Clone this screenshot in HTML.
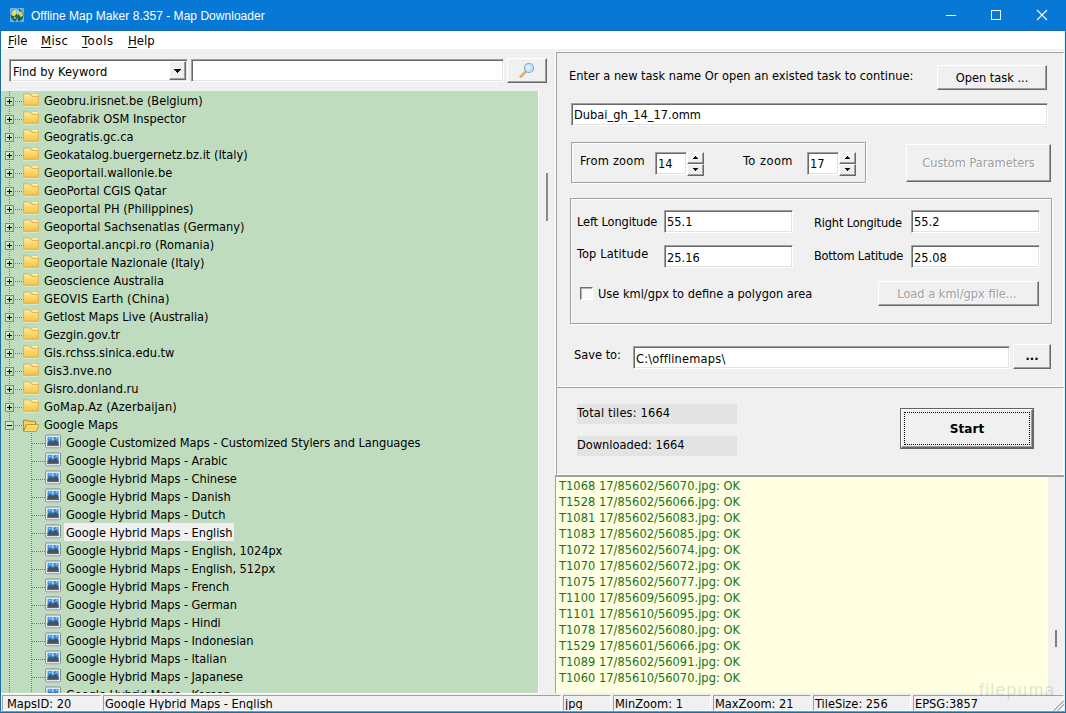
<!DOCTYPE html><html><head><meta charset="utf-8"><title>Offline Map Maker</title><style>html,body{margin:0;padding:0;background:#f0f0f0;overflow:hidden}
#win{position:relative;width:1066px;height:713px;overflow:hidden;background:#f0f0f0;font-family:"DejaVu Sans Condensed","Liberation Sans",sans-serif;font-size:12.7px;color:#000;line-height:16px}
#win *{box-sizing:border-box}
.a{position:absolute;white-space:nowrap}
#title{left:0;top:0;width:1066px;height:31px;background:#0878d6;border-bottom:1px solid #1769ad}
#ttext{left:31px;top:8px;color:#fff;font-family:"Liberation Sans",sans-serif;font-size:12px;letter-spacing:0.03px;line-height:16px}
#menubar{left:1px;top:31px;width:1064px;height:18px;background:#fff}
.mi{top:33px;font-size:13px;line-height:16px}
.mi u{text-decoration:underline;text-underline-offset:2px}
.bl{left:0;top:31px;width:1px;height:682px;background:#1c6ca0}
.br{left:1064px;top:31px;width:2px;height:682px;background:linear-gradient(90deg,#e2f2fa 0,#e2f2fa 50%,#1c6ca0 50%)}
.bb{left:0;top:711px;width:1066px;height:2px;background:linear-gradient(180deg,#5da0d4 0,#5da0d4 50%,#1c6ca0 50%)}
.sunken{background:#fff;border:1px solid;border-color:#a0a0a0 #fff #fff #a0a0a0;box-shadow:inset 1px 1px 0 #696969,inset -1px -1px 0 #e3e3e3}
.raised{background:#f0f0f0;border:1px solid;border-color:#fff #696969 #696969 #fff;box-shadow:inset -1px -1px 0 #a0a0a0,inset 1px 1px 0 #f0f0f0;text-align:center}
.dis{color:#a0a0a0;text-shadow:1px 1px 0 #fff}
.grp{border:1px solid #a0a0a0;box-shadow:inset 1px 1px 0 #fff,1px 1px 0 #fff}
.panel{border:1px solid;border-color:#a0a0a0 #fff #fff #a0a0a0;box-shadow:-1px -1px 0 #fff}
#tree{position:absolute;left:1px;top:91px;width:537px;height:602px;background:#bfdcbf;overflow:hidden}
.row{position:absolute;left:0;height:18px;width:537px;white-space:nowrap}
.pm{position:absolute;left:4px;top:6px;width:9px;height:9px;border:1px solid #7c8c7c;background:linear-gradient(135deg,#dcebdc,#bdd6bd);z-index:2}
.pm i{position:absolute;background:#000}
.pm .h{left:1px;top:3px;width:5px;height:1px}
.pm .v{left:3px;top:1px;width:1px;height:5px}
.dots{position:absolute;height:1px;top:10px;background-image:linear-gradient(90deg,#6f806f 50%,transparent 50%);background-size:2px 1px}
.d0{left:14px;width:9px}
.d1{left:31px;width:14px}
.vline{position:absolute;width:1px;background-image:linear-gradient(180deg,#6f806f 50%,transparent 50%);background-size:1px 2px}
.v0{left:8px;top:0;height:602px}
.v1{left:30px;top:342px;height:260px}
.fold{position:absolute;left:21px;top:1px}
.mapi{position:absolute;left:43px;top:0px}
.lbl{position:absolute;top:0;height:18px;line-height:16px;padding:2px 2px 0}
.l0{left:41px}
.l1{left:63px;letter-spacing:-0.05px}
.sel{background:#f0f0f0}
#log{position:absolute;left:556px;top:477px;width:492px;height:216px;background:#ffffe1;overflow:hidden;color:#187218}
.ll{position:absolute;left:3px;letter-spacing:0.05px;white-space:nowrap;line-height:16px}
.sp{top:695px;height:16px;border:1px solid;border-color:#a0a0a0 #fff #fff #a0a0a0;line-height:15px;padding-left:1px;overflow:hidden}
</style></head><body><div id="win">
<svg width="0" height="0" style="position:absolute"><defs><linearGradient id="fg" x1="0" y1="0" x2="0" y2="1"><stop offset="0" stop-color="#fdeeb0"/><stop offset="0.45" stop-color="#fbd970"/><stop offset="1" stop-color="#f6c346"/></linearGradient></defs></svg>
<div id="title" class="a"></div>
<svg class="a" style="left:10px;top:8px" width="14" height="14" viewBox="0 0 14 14"><rect width="14" height="14" fill="#64b4ef"/><circle cx="7" cy="7.2" r="6.4" fill="#23604e"/><path d="M1.2 5.6Q2.6 1.4 6 1.2L6.4 5.4L4.6 8.2L1.6 7.6Z" fill="#e3d96e"/><path d="M8.8 3.2L12 3.8L13 7.4L10.6 9.2L9 6.6Z" fill="#e8cf48"/><path d="M6 1.2L8.8 1.6L9 5.6L7.6 7.6L6.4 5.4Z" fill="#a8d2e4"/><path d="M4 8.4L6.4 9.2L5.6 11L3.6 10.4Z" fill="#9bb85c"/><path d="M7.1 9.8L8.4 13.8H6Z" fill="#86c2ee"/></svg>
<div id="ttext" class="a">Offline Map Maker 8.357 - Map Downloader</div>
<svg class="a" style="left:940px;top:5px" width="112" height="20" viewBox="0 0 112 20"><path d="M6 10.5H16" stroke="#fff" stroke-width="1"/><rect x="51.5" y="5.5" width="9" height="9" fill="none" stroke="#fff" stroke-width="1"/><path d="M97 5L107 15M107 5L97 15" stroke="#fff" stroke-width="1.1"/></svg>
<div id="menubar" class="a"></div>
<div class="a mi" style="left:8px"><u>F</u>ile</div>
<div class="a mi" style="left:41px;letter-spacing:0.35px"><u>M</u>isc</div>
<div class="a mi" style="left:82px;letter-spacing:0.65px"><u>T</u>ools</div>
<div class="a mi" style="left:128px"><u>H</u>elp</div>
<div class="a sunken" style="left:9px;top:59px;width:179px;height:23px"><div class="a" style="left:3px;top:4px;letter-spacing:0.07px">Find by Keyword</div><div class="a raised" style="left:159px;top:1px;width:17px;height:19px"><svg class="a" style="left:4px;top:7px" width="7" height="4" viewBox="0 0 7 4" shape-rendering="crispEdges"><path d="M0 0H7V1H6V2H5V3H4V4H3V3H2V2H1V1H0Z" fill="#000"/></svg></div></div>
<div class="a sunken" style="left:191px;top:59px;width:313px;height:23px"></div>
<div class="a raised" style="left:507px;top:58px;width:40px;height:25px"><svg class="a" style="left:9px;top:2px" width="20" height="20" viewBox="0 0 20 20"><path d="M9.2 10L3.6 15.6" stroke="#d9a066" stroke-width="2.6" stroke-linecap="round"/><path d="M8.8 9.8L3.4 15.2" stroke="#f0cfa0" stroke-width=".9" stroke-linecap="round"/><circle cx="12" cy="7" r="4.5" fill="#c6e8f9" stroke="#7fa9d2" stroke-width="1.2"/><circle cx="11.2" cy="6.2" r="1.8" fill="#e4f5fd"/></svg></div>
<div class="a" style="left:538px;top:91px;width:1px;height:602px;background:#fff"></div>
<div class="a" style="left:546px;top:173px;width:2px;height:48px;background:#8b8b8b"></div>

<div id="tree">
<div class="row" style="top:0px"><span class="pm"><i class="h"></i><i class="v"></i></span><span class="dots d0"></span><svg class="fold" width="18" height="16" viewBox="0 0 18 16"><rect x="1.2" y="13.7" width="15.6" height=".9" fill="#e9f2df" opacity=".85"/><path d="M9.4 1.6H16.1V5H10.5Z" fill="#fff3ae" stroke="#e6c160" stroke-width=".8"/><path d="M1.6 1.9H7.6L9.8 4.4H16.2V13.2H1.6Z" fill="url(#fg)" stroke="#dfae45" stroke-width=".9" stroke-linejoin="round"/>
</svg><span class="lbl l0">Geobru.irisnet.be (Belgium)</span></div>
<div class="row" style="top:18px"><span class="pm"><i class="h"></i><i class="v"></i></span><span class="dots d0"></span><svg class="fold" width="18" height="16" viewBox="0 0 18 16"><rect x="1.2" y="13.7" width="15.6" height=".9" fill="#e9f2df" opacity=".85"/><path d="M9.4 1.6H16.1V5H10.5Z" fill="#fff3ae" stroke="#e6c160" stroke-width=".8"/><path d="M1.6 1.9H7.6L9.8 4.4H16.2V13.2H1.6Z" fill="url(#fg)" stroke="#dfae45" stroke-width=".9" stroke-linejoin="round"/>
</svg><span class="lbl l0">Geofabrik OSM Inspector</span></div>
<div class="row" style="top:36px"><span class="pm"><i class="h"></i><i class="v"></i></span><span class="dots d0"></span><svg class="fold" width="18" height="16" viewBox="0 0 18 16"><rect x="1.2" y="13.7" width="15.6" height=".9" fill="#e9f2df" opacity=".85"/><path d="M9.4 1.6H16.1V5H10.5Z" fill="#fff3ae" stroke="#e6c160" stroke-width=".8"/><path d="M1.6 1.9H7.6L9.8 4.4H16.2V13.2H1.6Z" fill="url(#fg)" stroke="#dfae45" stroke-width=".9" stroke-linejoin="round"/>
</svg><span class="lbl l0">Geogratis.gc.ca</span></div>
<div class="row" style="top:54px"><span class="pm"><i class="h"></i><i class="v"></i></span><span class="dots d0"></span><svg class="fold" width="18" height="16" viewBox="0 0 18 16"><rect x="1.2" y="13.7" width="15.6" height=".9" fill="#e9f2df" opacity=".85"/><path d="M9.4 1.6H16.1V5H10.5Z" fill="#fff3ae" stroke="#e6c160" stroke-width=".8"/><path d="M1.6 1.9H7.6L9.8 4.4H16.2V13.2H1.6Z" fill="url(#fg)" stroke="#dfae45" stroke-width=".9" stroke-linejoin="round"/>
</svg><span class="lbl l0">Geokatalog.buergernetz.bz.it (Italy)</span></div>
<div class="row" style="top:72px"><span class="pm"><i class="h"></i><i class="v"></i></span><span class="dots d0"></span><svg class="fold" width="18" height="16" viewBox="0 0 18 16"><rect x="1.2" y="13.7" width="15.6" height=".9" fill="#e9f2df" opacity=".85"/><path d="M9.4 1.6H16.1V5H10.5Z" fill="#fff3ae" stroke="#e6c160" stroke-width=".8"/><path d="M1.6 1.9H7.6L9.8 4.4H16.2V13.2H1.6Z" fill="url(#fg)" stroke="#dfae45" stroke-width=".9" stroke-linejoin="round"/>
</svg><span class="lbl l0">Geoportail.wallonie.be</span></div>
<div class="row" style="top:90px"><span class="pm"><i class="h"></i><i class="v"></i></span><span class="dots d0"></span><svg class="fold" width="18" height="16" viewBox="0 0 18 16"><rect x="1.2" y="13.7" width="15.6" height=".9" fill="#e9f2df" opacity=".85"/><path d="M9.4 1.6H16.1V5H10.5Z" fill="#fff3ae" stroke="#e6c160" stroke-width=".8"/><path d="M1.6 1.9H7.6L9.8 4.4H16.2V13.2H1.6Z" fill="url(#fg)" stroke="#dfae45" stroke-width=".9" stroke-linejoin="round"/>
</svg><span class="lbl l0">GeoPortal CGIS Qatar</span></div>
<div class="row" style="top:108px"><span class="pm"><i class="h"></i><i class="v"></i></span><span class="dots d0"></span><svg class="fold" width="18" height="16" viewBox="0 0 18 16"><rect x="1.2" y="13.7" width="15.6" height=".9" fill="#e9f2df" opacity=".85"/><path d="M9.4 1.6H16.1V5H10.5Z" fill="#fff3ae" stroke="#e6c160" stroke-width=".8"/><path d="M1.6 1.9H7.6L9.8 4.4H16.2V13.2H1.6Z" fill="url(#fg)" stroke="#dfae45" stroke-width=".9" stroke-linejoin="round"/>
</svg><span class="lbl l0">Geoportal PH (Philippines)</span></div>
<div class="row" style="top:126px"><span class="pm"><i class="h"></i><i class="v"></i></span><span class="dots d0"></span><svg class="fold" width="18" height="16" viewBox="0 0 18 16"><rect x="1.2" y="13.7" width="15.6" height=".9" fill="#e9f2df" opacity=".85"/><path d="M9.4 1.6H16.1V5H10.5Z" fill="#fff3ae" stroke="#e6c160" stroke-width=".8"/><path d="M1.6 1.9H7.6L9.8 4.4H16.2V13.2H1.6Z" fill="url(#fg)" stroke="#dfae45" stroke-width=".9" stroke-linejoin="round"/>
</svg><span class="lbl l0">Geoportal Sachsenatlas (Germany)</span></div>
<div class="row" style="top:144px"><span class="pm"><i class="h"></i><i class="v"></i></span><span class="dots d0"></span><svg class="fold" width="18" height="16" viewBox="0 0 18 16"><rect x="1.2" y="13.7" width="15.6" height=".9" fill="#e9f2df" opacity=".85"/><path d="M9.4 1.6H16.1V5H10.5Z" fill="#fff3ae" stroke="#e6c160" stroke-width=".8"/><path d="M1.6 1.9H7.6L9.8 4.4H16.2V13.2H1.6Z" fill="url(#fg)" stroke="#dfae45" stroke-width=".9" stroke-linejoin="round"/>
</svg><span class="lbl l0" style="letter-spacing:0.07px">Geoportal.ancpi.ro (Romania)</span></div>
<div class="row" style="top:162px"><span class="pm"><i class="h"></i><i class="v"></i></span><span class="dots d0"></span><svg class="fold" width="18" height="16" viewBox="0 0 18 16"><rect x="1.2" y="13.7" width="15.6" height=".9" fill="#e9f2df" opacity=".85"/><path d="M9.4 1.6H16.1V5H10.5Z" fill="#fff3ae" stroke="#e6c160" stroke-width=".8"/><path d="M1.6 1.9H7.6L9.8 4.4H16.2V13.2H1.6Z" fill="url(#fg)" stroke="#dfae45" stroke-width=".9" stroke-linejoin="round"/>
</svg><span class="lbl l0">Geoportale Nazionale (Italy)</span></div>
<div class="row" style="top:180px"><span class="pm"><i class="h"></i><i class="v"></i></span><span class="dots d0"></span><svg class="fold" width="18" height="16" viewBox="0 0 18 16"><rect x="1.2" y="13.7" width="15.6" height=".9" fill="#e9f2df" opacity=".85"/><path d="M9.4 1.6H16.1V5H10.5Z" fill="#fff3ae" stroke="#e6c160" stroke-width=".8"/><path d="M1.6 1.9H7.6L9.8 4.4H16.2V13.2H1.6Z" fill="url(#fg)" stroke="#dfae45" stroke-width=".9" stroke-linejoin="round"/>
</svg><span class="lbl l0">Geoscience Australia</span></div>
<div class="row" style="top:198px"><span class="pm"><i class="h"></i><i class="v"></i></span><span class="dots d0"></span><svg class="fold" width="18" height="16" viewBox="0 0 18 16"><rect x="1.2" y="13.7" width="15.6" height=".9" fill="#e9f2df" opacity=".85"/><path d="M9.4 1.6H16.1V5H10.5Z" fill="#fff3ae" stroke="#e6c160" stroke-width=".8"/><path d="M1.6 1.9H7.6L9.8 4.4H16.2V13.2H1.6Z" fill="url(#fg)" stroke="#dfae45" stroke-width=".9" stroke-linejoin="round"/>
</svg><span class="lbl l0" style="letter-spacing:0.15px">GEOVIS Earth (China)</span></div>
<div class="row" style="top:216px"><span class="pm"><i class="h"></i><i class="v"></i></span><span class="dots d0"></span><svg class="fold" width="18" height="16" viewBox="0 0 18 16"><rect x="1.2" y="13.7" width="15.6" height=".9" fill="#e9f2df" opacity=".85"/><path d="M9.4 1.6H16.1V5H10.5Z" fill="#fff3ae" stroke="#e6c160" stroke-width=".8"/><path d="M1.6 1.9H7.6L9.8 4.4H16.2V13.2H1.6Z" fill="url(#fg)" stroke="#dfae45" stroke-width=".9" stroke-linejoin="round"/>
</svg><span class="lbl l0">Getlost Maps Live (Australia)</span></div>
<div class="row" style="top:234px"><span class="pm"><i class="h"></i><i class="v"></i></span><span class="dots d0"></span><svg class="fold" width="18" height="16" viewBox="0 0 18 16"><rect x="1.2" y="13.7" width="15.6" height=".9" fill="#e9f2df" opacity=".85"/><path d="M9.4 1.6H16.1V5H10.5Z" fill="#fff3ae" stroke="#e6c160" stroke-width=".8"/><path d="M1.6 1.9H7.6L9.8 4.4H16.2V13.2H1.6Z" fill="url(#fg)" stroke="#dfae45" stroke-width=".9" stroke-linejoin="round"/>
</svg><span class="lbl l0">Gezgin.gov.tr</span></div>
<div class="row" style="top:252px"><span class="pm"><i class="h"></i><i class="v"></i></span><span class="dots d0"></span><svg class="fold" width="18" height="16" viewBox="0 0 18 16"><rect x="1.2" y="13.7" width="15.6" height=".9" fill="#e9f2df" opacity=".85"/><path d="M9.4 1.6H16.1V5H10.5Z" fill="#fff3ae" stroke="#e6c160" stroke-width=".8"/><path d="M1.6 1.9H7.6L9.8 4.4H16.2V13.2H1.6Z" fill="url(#fg)" stroke="#dfae45" stroke-width=".9" stroke-linejoin="round"/>
</svg><span class="lbl l0">Gis.rchss.sinica.edu.tw</span></div>
<div class="row" style="top:270px"><span class="pm"><i class="h"></i><i class="v"></i></span><span class="dots d0"></span><svg class="fold" width="18" height="16" viewBox="0 0 18 16"><rect x="1.2" y="13.7" width="15.6" height=".9" fill="#e9f2df" opacity=".85"/><path d="M9.4 1.6H16.1V5H10.5Z" fill="#fff3ae" stroke="#e6c160" stroke-width=".8"/><path d="M1.6 1.9H7.6L9.8 4.4H16.2V13.2H1.6Z" fill="url(#fg)" stroke="#dfae45" stroke-width=".9" stroke-linejoin="round"/>
</svg><span class="lbl l0">Gis3.nve.no</span></div>
<div class="row" style="top:288px"><span class="pm"><i class="h"></i><i class="v"></i></span><span class="dots d0"></span><svg class="fold" width="18" height="16" viewBox="0 0 18 16"><rect x="1.2" y="13.7" width="15.6" height=".9" fill="#e9f2df" opacity=".85"/><path d="M9.4 1.6H16.1V5H10.5Z" fill="#fff3ae" stroke="#e6c160" stroke-width=".8"/><path d="M1.6 1.9H7.6L9.8 4.4H16.2V13.2H1.6Z" fill="url(#fg)" stroke="#dfae45" stroke-width=".9" stroke-linejoin="round"/>
</svg><span class="lbl l0">Gisro.donland.ru</span></div>
<div class="row" style="top:306px"><span class="pm"><i class="h"></i><i class="v"></i></span><span class="dots d0"></span><svg class="fold" width="18" height="16" viewBox="0 0 18 16"><rect x="1.2" y="13.7" width="15.6" height=".9" fill="#e9f2df" opacity=".85"/><path d="M9.4 1.6H16.1V5H10.5Z" fill="#fff3ae" stroke="#e6c160" stroke-width=".8"/><path d="M1.6 1.9H7.6L9.8 4.4H16.2V13.2H1.6Z" fill="url(#fg)" stroke="#dfae45" stroke-width=".9" stroke-linejoin="round"/>
</svg><span class="lbl l0" style="letter-spacing:0.13px">GoMap.Az (Azerbaijan)</span></div>
<div class="row" style="top:324px"><span class="pm"><i class="h"></i></span><span class="dots d0"></span><svg class="fold" width="18" height="16" viewBox="0 0 18 16"><path d="M1.5 5.2Q1.5 4.3 2.4 4.3H5.6L6.8 5.3H12.6Q13.6 5.3 13.6 6.3V8.8H4.2L1.8 15Q1.5 14.5 1.5 13.8Z" fill="#f3d468" stroke="#b98a14" stroke-width="1.1" stroke-linejoin="round"/><path d="M4.4 8.6H16.2Q16.9 8.6 16.6 9.4L14.6 15Q14.4 15.6 13.7 15.6H2.4Q1.7 15.6 2 14.9Z" fill="#ffe98e" stroke="#c4961e" stroke-width="1" stroke-linejoin="round"/><path d="M4.9 9.9H15.3L13.9 14.4H3.3Z" fill="#fad561"/>
</svg><span class="lbl l0">Google Maps</span></div>
<div class="row" style="top:342px"><span class="dots d1"></span><svg class="mapi" width="18" height="16" viewBox="0 0 18 16"><rect x="1.6" y="15.4" width="15" height=".9" fill="#eef4ea" opacity=".9"/><rect x="1.7" y="2" width="14.7" height="12.9" rx=".9" fill="#fdfefe" stroke="#7b868c" stroke-width="1"/><rect x="3.5" y="3.8" width="11.1" height="9.3" fill="#3690e6"/><path d="M3.5 9.6L5 8.2Q6.3 6.9 7.4 8L9 9.2L10.6 7.6Q11.8 6.6 12.8 7.8L14.6 9.6V13.1H3.5Z" fill="#48525a"/><path d="M3.5 11.8H14.6V13.1H3.5Z" fill="#63676a"/><circle cx="9.2" cy="5.6" r="1.5" fill="#d8eefc"/><circle cx="9.9" cy="5.6" r="1.15" fill="#3690e6"/><path d="M5.6 4.5V6.1M4.8 5.3H6.4M12.6 4.3V5.9M11.8 5.1H13.4" stroke="#bfe0fa" stroke-width=".7"/>
</svg><span class="lbl l1">Google Customized Maps - Customized Stylers and Languages</span></div>
<div class="row" style="top:360px"><span class="dots d1"></span><svg class="mapi" width="18" height="16" viewBox="0 0 18 16"><rect x="1.6" y="15.4" width="15" height=".9" fill="#eef4ea" opacity=".9"/><rect x="1.7" y="2" width="14.7" height="12.9" rx=".9" fill="#fdfefe" stroke="#7b868c" stroke-width="1"/><rect x="3.5" y="3.8" width="11.1" height="9.3" fill="#3690e6"/><path d="M3.5 9.6L5 8.2Q6.3 6.9 7.4 8L9 9.2L10.6 7.6Q11.8 6.6 12.8 7.8L14.6 9.6V13.1H3.5Z" fill="#48525a"/><path d="M3.5 11.8H14.6V13.1H3.5Z" fill="#63676a"/><circle cx="9.2" cy="5.6" r="1.5" fill="#d8eefc"/><circle cx="9.9" cy="5.6" r="1.15" fill="#3690e6"/><path d="M5.6 4.5V6.1M4.8 5.3H6.4M12.6 4.3V5.9M11.8 5.1H13.4" stroke="#bfe0fa" stroke-width=".7"/>
</svg><span class="lbl l1">Google Hybrid Maps - Arabic</span></div>
<div class="row" style="top:378px"><span class="dots d1"></span><svg class="mapi" width="18" height="16" viewBox="0 0 18 16"><rect x="1.6" y="15.4" width="15" height=".9" fill="#eef4ea" opacity=".9"/><rect x="1.7" y="2" width="14.7" height="12.9" rx=".9" fill="#fdfefe" stroke="#7b868c" stroke-width="1"/><rect x="3.5" y="3.8" width="11.1" height="9.3" fill="#3690e6"/><path d="M3.5 9.6L5 8.2Q6.3 6.9 7.4 8L9 9.2L10.6 7.6Q11.8 6.6 12.8 7.8L14.6 9.6V13.1H3.5Z" fill="#48525a"/><path d="M3.5 11.8H14.6V13.1H3.5Z" fill="#63676a"/><circle cx="9.2" cy="5.6" r="1.5" fill="#d8eefc"/><circle cx="9.9" cy="5.6" r="1.15" fill="#3690e6"/><path d="M5.6 4.5V6.1M4.8 5.3H6.4M12.6 4.3V5.9M11.8 5.1H13.4" stroke="#bfe0fa" stroke-width=".7"/>
</svg><span class="lbl l1">Google Hybrid Maps - Chinese</span></div>
<div class="row" style="top:396px"><span class="dots d1"></span><svg class="mapi" width="18" height="16" viewBox="0 0 18 16"><rect x="1.6" y="15.4" width="15" height=".9" fill="#eef4ea" opacity=".9"/><rect x="1.7" y="2" width="14.7" height="12.9" rx=".9" fill="#fdfefe" stroke="#7b868c" stroke-width="1"/><rect x="3.5" y="3.8" width="11.1" height="9.3" fill="#3690e6"/><path d="M3.5 9.6L5 8.2Q6.3 6.9 7.4 8L9 9.2L10.6 7.6Q11.8 6.6 12.8 7.8L14.6 9.6V13.1H3.5Z" fill="#48525a"/><path d="M3.5 11.8H14.6V13.1H3.5Z" fill="#63676a"/><circle cx="9.2" cy="5.6" r="1.5" fill="#d8eefc"/><circle cx="9.9" cy="5.6" r="1.15" fill="#3690e6"/><path d="M5.6 4.5V6.1M4.8 5.3H6.4M12.6 4.3V5.9M11.8 5.1H13.4" stroke="#bfe0fa" stroke-width=".7"/>
</svg><span class="lbl l1">Google Hybrid Maps - Danish</span></div>
<div class="row" style="top:414px"><span class="dots d1"></span><svg class="mapi" width="18" height="16" viewBox="0 0 18 16"><rect x="1.6" y="15.4" width="15" height=".9" fill="#eef4ea" opacity=".9"/><rect x="1.7" y="2" width="14.7" height="12.9" rx=".9" fill="#fdfefe" stroke="#7b868c" stroke-width="1"/><rect x="3.5" y="3.8" width="11.1" height="9.3" fill="#3690e6"/><path d="M3.5 9.6L5 8.2Q6.3 6.9 7.4 8L9 9.2L10.6 7.6Q11.8 6.6 12.8 7.8L14.6 9.6V13.1H3.5Z" fill="#48525a"/><path d="M3.5 11.8H14.6V13.1H3.5Z" fill="#63676a"/><circle cx="9.2" cy="5.6" r="1.5" fill="#d8eefc"/><circle cx="9.9" cy="5.6" r="1.15" fill="#3690e6"/><path d="M5.6 4.5V6.1M4.8 5.3H6.4M12.6 4.3V5.9M11.8 5.1H13.4" stroke="#bfe0fa" stroke-width=".7"/>
</svg><span class="lbl l1">Google Hybrid Maps - Dutch</span></div>
<div class="row" style="top:432px"><span class="dots d1"></span><svg class="mapi" width="18" height="16" viewBox="0 0 18 16"><rect x="1.6" y="15.4" width="15" height=".9" fill="#eef4ea" opacity=".9"/><rect x="1.7" y="2" width="14.7" height="12.9" rx=".9" fill="#fdfefe" stroke="#7b868c" stroke-width="1"/><rect x="3.5" y="3.8" width="11.1" height="9.3" fill="#3690e6"/><path d="M3.5 9.6L5 8.2Q6.3 6.9 7.4 8L9 9.2L10.6 7.6Q11.8 6.6 12.8 7.8L14.6 9.6V13.1H3.5Z" fill="#48525a"/><path d="M3.5 11.8H14.6V13.1H3.5Z" fill="#63676a"/><circle cx="9.2" cy="5.6" r="1.5" fill="#d8eefc"/><circle cx="9.9" cy="5.6" r="1.15" fill="#3690e6"/><path d="M5.6 4.5V6.1M4.8 5.3H6.4M12.6 4.3V5.9M11.8 5.1H13.4" stroke="#bfe0fa" stroke-width=".7"/>
</svg><span class="lbl l1 sel">Google Hybrid Maps - English</span></div>
<div class="row" style="top:450px"><span class="dots d1"></span><svg class="mapi" width="18" height="16" viewBox="0 0 18 16"><rect x="1.6" y="15.4" width="15" height=".9" fill="#eef4ea" opacity=".9"/><rect x="1.7" y="2" width="14.7" height="12.9" rx=".9" fill="#fdfefe" stroke="#7b868c" stroke-width="1"/><rect x="3.5" y="3.8" width="11.1" height="9.3" fill="#3690e6"/><path d="M3.5 9.6L5 8.2Q6.3 6.9 7.4 8L9 9.2L10.6 7.6Q11.8 6.6 12.8 7.8L14.6 9.6V13.1H3.5Z" fill="#48525a"/><path d="M3.5 11.8H14.6V13.1H3.5Z" fill="#63676a"/><circle cx="9.2" cy="5.6" r="1.5" fill="#d8eefc"/><circle cx="9.9" cy="5.6" r="1.15" fill="#3690e6"/><path d="M5.6 4.5V6.1M4.8 5.3H6.4M12.6 4.3V5.9M11.8 5.1H13.4" stroke="#bfe0fa" stroke-width=".7"/>
</svg><span class="lbl l1">Google Hybrid Maps - English, 1024px</span></div>
<div class="row" style="top:468px"><span class="dots d1"></span><svg class="mapi" width="18" height="16" viewBox="0 0 18 16"><rect x="1.6" y="15.4" width="15" height=".9" fill="#eef4ea" opacity=".9"/><rect x="1.7" y="2" width="14.7" height="12.9" rx=".9" fill="#fdfefe" stroke="#7b868c" stroke-width="1"/><rect x="3.5" y="3.8" width="11.1" height="9.3" fill="#3690e6"/><path d="M3.5 9.6L5 8.2Q6.3 6.9 7.4 8L9 9.2L10.6 7.6Q11.8 6.6 12.8 7.8L14.6 9.6V13.1H3.5Z" fill="#48525a"/><path d="M3.5 11.8H14.6V13.1H3.5Z" fill="#63676a"/><circle cx="9.2" cy="5.6" r="1.5" fill="#d8eefc"/><circle cx="9.9" cy="5.6" r="1.15" fill="#3690e6"/><path d="M5.6 4.5V6.1M4.8 5.3H6.4M12.6 4.3V5.9M11.8 5.1H13.4" stroke="#bfe0fa" stroke-width=".7"/>
</svg><span class="lbl l1">Google Hybrid Maps - English, 512px</span></div>
<div class="row" style="top:486px"><span class="dots d1"></span><svg class="mapi" width="18" height="16" viewBox="0 0 18 16"><rect x="1.6" y="15.4" width="15" height=".9" fill="#eef4ea" opacity=".9"/><rect x="1.7" y="2" width="14.7" height="12.9" rx=".9" fill="#fdfefe" stroke="#7b868c" stroke-width="1"/><rect x="3.5" y="3.8" width="11.1" height="9.3" fill="#3690e6"/><path d="M3.5 9.6L5 8.2Q6.3 6.9 7.4 8L9 9.2L10.6 7.6Q11.8 6.6 12.8 7.8L14.6 9.6V13.1H3.5Z" fill="#48525a"/><path d="M3.5 11.8H14.6V13.1H3.5Z" fill="#63676a"/><circle cx="9.2" cy="5.6" r="1.5" fill="#d8eefc"/><circle cx="9.9" cy="5.6" r="1.15" fill="#3690e6"/><path d="M5.6 4.5V6.1M4.8 5.3H6.4M12.6 4.3V5.9M11.8 5.1H13.4" stroke="#bfe0fa" stroke-width=".7"/>
</svg><span class="lbl l1">Google Hybrid Maps - French</span></div>
<div class="row" style="top:504px"><span class="dots d1"></span><svg class="mapi" width="18" height="16" viewBox="0 0 18 16"><rect x="1.6" y="15.4" width="15" height=".9" fill="#eef4ea" opacity=".9"/><rect x="1.7" y="2" width="14.7" height="12.9" rx=".9" fill="#fdfefe" stroke="#7b868c" stroke-width="1"/><rect x="3.5" y="3.8" width="11.1" height="9.3" fill="#3690e6"/><path d="M3.5 9.6L5 8.2Q6.3 6.9 7.4 8L9 9.2L10.6 7.6Q11.8 6.6 12.8 7.8L14.6 9.6V13.1H3.5Z" fill="#48525a"/><path d="M3.5 11.8H14.6V13.1H3.5Z" fill="#63676a"/><circle cx="9.2" cy="5.6" r="1.5" fill="#d8eefc"/><circle cx="9.9" cy="5.6" r="1.15" fill="#3690e6"/><path d="M5.6 4.5V6.1M4.8 5.3H6.4M12.6 4.3V5.9M11.8 5.1H13.4" stroke="#bfe0fa" stroke-width=".7"/>
</svg><span class="lbl l1">Google Hybrid Maps - German</span></div>
<div class="row" style="top:522px"><span class="dots d1"></span><svg class="mapi" width="18" height="16" viewBox="0 0 18 16"><rect x="1.6" y="15.4" width="15" height=".9" fill="#eef4ea" opacity=".9"/><rect x="1.7" y="2" width="14.7" height="12.9" rx=".9" fill="#fdfefe" stroke="#7b868c" stroke-width="1"/><rect x="3.5" y="3.8" width="11.1" height="9.3" fill="#3690e6"/><path d="M3.5 9.6L5 8.2Q6.3 6.9 7.4 8L9 9.2L10.6 7.6Q11.8 6.6 12.8 7.8L14.6 9.6V13.1H3.5Z" fill="#48525a"/><path d="M3.5 11.8H14.6V13.1H3.5Z" fill="#63676a"/><circle cx="9.2" cy="5.6" r="1.5" fill="#d8eefc"/><circle cx="9.9" cy="5.6" r="1.15" fill="#3690e6"/><path d="M5.6 4.5V6.1M4.8 5.3H6.4M12.6 4.3V5.9M11.8 5.1H13.4" stroke="#bfe0fa" stroke-width=".7"/>
</svg><span class="lbl l1">Google Hybrid Maps - Hindi</span></div>
<div class="row" style="top:540px"><span class="dots d1"></span><svg class="mapi" width="18" height="16" viewBox="0 0 18 16"><rect x="1.6" y="15.4" width="15" height=".9" fill="#eef4ea" opacity=".9"/><rect x="1.7" y="2" width="14.7" height="12.9" rx=".9" fill="#fdfefe" stroke="#7b868c" stroke-width="1"/><rect x="3.5" y="3.8" width="11.1" height="9.3" fill="#3690e6"/><path d="M3.5 9.6L5 8.2Q6.3 6.9 7.4 8L9 9.2L10.6 7.6Q11.8 6.6 12.8 7.8L14.6 9.6V13.1H3.5Z" fill="#48525a"/><path d="M3.5 11.8H14.6V13.1H3.5Z" fill="#63676a"/><circle cx="9.2" cy="5.6" r="1.5" fill="#d8eefc"/><circle cx="9.9" cy="5.6" r="1.15" fill="#3690e6"/><path d="M5.6 4.5V6.1M4.8 5.3H6.4M12.6 4.3V5.9M11.8 5.1H13.4" stroke="#bfe0fa" stroke-width=".7"/>
</svg><span class="lbl l1">Google Hybrid Maps - Indonesian</span></div>
<div class="row" style="top:558px"><span class="dots d1"></span><svg class="mapi" width="18" height="16" viewBox="0 0 18 16"><rect x="1.6" y="15.4" width="15" height=".9" fill="#eef4ea" opacity=".9"/><rect x="1.7" y="2" width="14.7" height="12.9" rx=".9" fill="#fdfefe" stroke="#7b868c" stroke-width="1"/><rect x="3.5" y="3.8" width="11.1" height="9.3" fill="#3690e6"/><path d="M3.5 9.6L5 8.2Q6.3 6.9 7.4 8L9 9.2L10.6 7.6Q11.8 6.6 12.8 7.8L14.6 9.6V13.1H3.5Z" fill="#48525a"/><path d="M3.5 11.8H14.6V13.1H3.5Z" fill="#63676a"/><circle cx="9.2" cy="5.6" r="1.5" fill="#d8eefc"/><circle cx="9.9" cy="5.6" r="1.15" fill="#3690e6"/><path d="M5.6 4.5V6.1M4.8 5.3H6.4M12.6 4.3V5.9M11.8 5.1H13.4" stroke="#bfe0fa" stroke-width=".7"/>
</svg><span class="lbl l1">Google Hybrid Maps - Italian</span></div>
<div class="row" style="top:576px"><span class="dots d1"></span><svg class="mapi" width="18" height="16" viewBox="0 0 18 16"><rect x="1.6" y="15.4" width="15" height=".9" fill="#eef4ea" opacity=".9"/><rect x="1.7" y="2" width="14.7" height="12.9" rx=".9" fill="#fdfefe" stroke="#7b868c" stroke-width="1"/><rect x="3.5" y="3.8" width="11.1" height="9.3" fill="#3690e6"/><path d="M3.5 9.6L5 8.2Q6.3 6.9 7.4 8L9 9.2L10.6 7.6Q11.8 6.6 12.8 7.8L14.6 9.6V13.1H3.5Z" fill="#48525a"/><path d="M3.5 11.8H14.6V13.1H3.5Z" fill="#63676a"/><circle cx="9.2" cy="5.6" r="1.5" fill="#d8eefc"/><circle cx="9.9" cy="5.6" r="1.15" fill="#3690e6"/><path d="M5.6 4.5V6.1M4.8 5.3H6.4M12.6 4.3V5.9M11.8 5.1H13.4" stroke="#bfe0fa" stroke-width=".7"/>
</svg><span class="lbl l1">Google Hybrid Maps - Japanese</span></div>
<div class="row" style="top:594px"><span class="dots d1"></span><svg class="mapi" width="18" height="16" viewBox="0 0 18 16"><rect x="1.6" y="15.4" width="15" height=".9" fill="#eef4ea" opacity=".9"/><rect x="1.7" y="2" width="14.7" height="12.9" rx=".9" fill="#fdfefe" stroke="#7b868c" stroke-width="1"/><rect x="3.5" y="3.8" width="11.1" height="9.3" fill="#3690e6"/><path d="M3.5 9.6L5 8.2Q6.3 6.9 7.4 8L9 9.2L10.6 7.6Q11.8 6.6 12.8 7.8L14.6 9.6V13.1H3.5Z" fill="#48525a"/><path d="M3.5 11.8H14.6V13.1H3.5Z" fill="#63676a"/><circle cx="9.2" cy="5.6" r="1.5" fill="#d8eefc"/><circle cx="9.9" cy="5.6" r="1.15" fill="#3690e6"/><path d="M5.6 4.5V6.1M4.8 5.3H6.4M12.6 4.3V5.9M11.8 5.1H13.4" stroke="#bfe0fa" stroke-width=".7"/>
</svg><span class="lbl l1">Google Hybrid Maps - Korean</span></div>
<div class="vline v0"></div><div class="vline v1"></div>
</div>
<div class="a panel" style="left:556px;top:52px;width:508px;height:335px"></div>
<div class="a panel" style="left:556px;top:387px;width:508px;height:88px"></div>
<div class="a" style="left:569px;top:68px">Enter a new task name Or open an existed task to continue:</div>
<div class="a raised" style="left:937px;top:65px;width:110px;height:25px;line-height:23px">Open task ...</div>
<div class="a sunken" style="left:571px;top:103px;width:477px;height:23px"><div class="a" style="left:2px;top:3px">Dubai_gh_14_17.omm</div></div>
<div class="a grp" style="left:571px;top:142px;width:295px;height:41px"></div>
<div class="a" style="left:580px;top:153px;letter-spacing:0.22px">From zoom</div>
<div class="a sunken" style="left:655px;top:152px;width:32px;height:23px"><div class="a" style="left:2px;top:2.6px">14</div></div>
<div class="a raised" style="left:687px;top:152px;width:17px;height:12px"><svg class="a" style="left:5px;top:3px" width="5" height="3" viewBox="0 0 5 3" shape-rendering="crispEdges"><path d="M2 0H3V1H4V2H5V3H0V2H1V1H2Z" fill="#000"/></svg></div>
<div class="a raised" style="left:687px;top:164px;width:17px;height:12px"><svg class="a" style="left:5px;top:3px" width="5" height="3" viewBox="0 0 5 3" shape-rendering="crispEdges"><path d="M0 0H5V1H4V2H3V3H2V2H1V1H0Z" fill="#000"/></svg></div>
<div class="a" style="left:743px;top:153px;letter-spacing:0.5px">To zoom</div>
<div class="a sunken" style="left:807px;top:152px;width:32px;height:23px"><div class="a" style="left:2px;top:2.6px">17</div></div>
<div class="a raised" style="left:839px;top:152px;width:17px;height:12px"><svg class="a" style="left:5px;top:3px" width="5" height="3" viewBox="0 0 5 3" shape-rendering="crispEdges"><path d="M2 0H3V1H4V2H5V3H0V2H1V1H2Z" fill="#000"/></svg></div>
<div class="a raised" style="left:839px;top:164px;width:17px;height:12px"><svg class="a" style="left:5px;top:3px" width="5" height="3" viewBox="0 0 5 3" shape-rendering="crispEdges"><path d="M0 0H5V1H4V2H3V3H2V2H1V1H0Z" fill="#000"/></svg></div>
<div class="a raised dis" style="left:906px;top:144px;width:145px;height:38px;line-height:36px">Custom Parameters</div>
<div class="a grp" style="left:570px;top:198px;width:482px;height:126px"></div>
<div class="a" style="left:577px;top:214px;letter-spacing:-0.11px">Left Longitude</div>
<div class="a sunken" style="left:664px;top:210px;width:129px;height:23px"><div class="a" style="left:2px;top:3px">55.1</div></div>
<div class="a" style="left:814px;top:215px;letter-spacing:-0.17px">Right Longitude</div>
<div class="a sunken" style="left:911px;top:210px;width:129px;height:23px"><div class="a" style="left:2px;top:3px">55.2</div></div>
<div class="a" style="left:577px;top:246px;letter-spacing:0.14px">Top Latitude</div>
<div class="a sunken" style="left:664px;top:245px;width:129px;height:23px"><div class="a" style="left:2px;top:3.5px">25.16</div></div>
<div class="a" style="left:814px;top:248px;letter-spacing:-0.23px">Bottom Latitude</div>
<div class="a sunken" style="left:911px;top:245px;width:129px;height:23px"><div class="a" style="left:2px;top:3.5px">25.08</div></div>
<div class="a" style="left:580px;top:287px;width:13px;height:13px;background:#fafafa;border:1px solid;border-color:#6e6e6e #fff #fff #6e6e6e;box-shadow:inset 1px 1px 0 #b4b4b4"></div>
<div class="a" style="left:598px;top:286px">Use kml/gpx to define a polygon area</div>
<div class="a raised dis" style="left:878px;top:281px;width:161px;height:25px;line-height:24px;padding-right:3px">Load a kml/gpx file...</div>
<div class="a" style="left:574px;top:347px">Save to:</div>
<div class="a sunken" style="left:633px;top:346px;width:377px;height:23px"><div class="a" style="left:2px;top:4px;letter-spacing:0.2px">C:\offlinemaps\</div></div>
<div class="a raised" style="left:1013px;top:344px;width:38px;height:25px;line-height:22px;font-weight:bold">...</div>
<div class="a" style="left:577px;top:404px;width:160px;height:20px;background:#e3e3e3"></div>
<div class="a" style="left:577px;top:405px;letter-spacing:0.17px">Total tiles: 1664</div>
<div class="a" style="left:577px;top:436px;width:160px;height:20px;background:#e3e3e3"></div>
<div class="a" style="left:577px;top:437px">Downloaded: 1664</div>
<div class="a" style="left:900px;top:408px;width:134px;height:41px;border:1px solid #646464;background:#f0f0f0"><div class="a raised" style="left:0;top:0;width:132px;height:39px"></div><div class="a" style="left:3px;top:3px;width:126px;height:33px;border:1px dotted #000"></div><div class="a" style="left:0;top:12px;width:132px;text-align:center;font-weight:bold;font-family:'DejaVu Sans','Liberation Sans',sans-serif;font-size:12.1px">Start</div></div>
<div class="a" style="left:555px;top:475px;width:1px;height:218px;background:#a0a0a0"></div>
<div class="a" style="left:555px;top:475px;width:509px;height:2px;background:#a0a0a0"></div>
<div class="a" style="left:1055px;top:630px;width:2px;height:17px;background:#7f7f7f"></div>

<div id="log">
<div class="ll" style="top:1px">T1068 17/85602/56070.jpg: OK</div>
<div class="ll" style="top:17px">T1528 17/85602/56066.jpg: OK</div>
<div class="ll" style="top:33px">T1081 17/85602/56083.jpg: OK</div>
<div class="ll" style="top:49px">T1083 17/85602/56085.jpg: OK</div>
<div class="ll" style="top:65px">T1072 17/85602/56074.jpg: OK</div>
<div class="ll" style="top:81px">T1070 17/85602/56072.jpg: OK</div>
<div class="ll" style="top:97px">T1075 17/85602/56077.jpg: OK</div>
<div class="ll" style="top:113px">T1100 17/85609/56095.jpg: OK</div>
<div class="ll" style="top:129px">T1101 17/85610/56095.jpg: OK</div>
<div class="ll" style="top:145px">T1078 17/85602/56080.jpg: OK</div>
<div class="ll" style="top:161px">T1529 17/85601/56066.jpg: OK</div>
<div class="ll" style="top:177px">T1089 17/85602/56091.jpg: OK</div>
<div class="ll" style="top:193px">T1060 17/85610/56070.jpg: OK</div>
</div>
<div class="a" style="left:1px;top:693px;width:1064px;height:18px;background:#f0f0f0"></div>
<div class="a" style="left:1px;top:693px;width:537px;height:1px;background:#fff"></div>
<div class="a sp" style="left:2px;width:99px;padding-left:4px">MapsID: 20</div>
<div class="a sp" style="left:103px;width:458px">Google Hybrid Maps - English</div>
<div class="a sp" style="left:563px;width:48px">jpg</div>
<div class="a sp" style="left:613px;width:98px">MinZoom: 1</div>
<div class="a sp" style="left:713px;width:98px">MaxZoom: 21</div>
<div class="a sp" style="left:813px;width:98px">TileSize: 256</div>
<div class="a sp" style="left:913px;width:151px">EPSG:3857</div>
<svg class="a" style="left:1050px;top:697px" width="14" height="14" viewBox="0 0 14 14"><path d="M2.6 13.1L13.4 2.7M6.5 13.1L13.4 6.4" stroke="#fff" stroke-width="1.2"/><path d="M3.6 13.6L13.8 3.6M7.5 13.6L13.8 7.4" stroke="#9a9a9a" stroke-width="1.1"/></svg>
<div class="a" style="left:979px;top:680px;font-family:'Liberation Sans',sans-serif;font-size:17.5px;letter-spacing:1.3px;line-height:20px;color:rgba(120,120,120,.22)">filepuma</div>
<div class="a bl"></div><div class="a br"></div><div class="a bb"></div>

</div></body></html>
